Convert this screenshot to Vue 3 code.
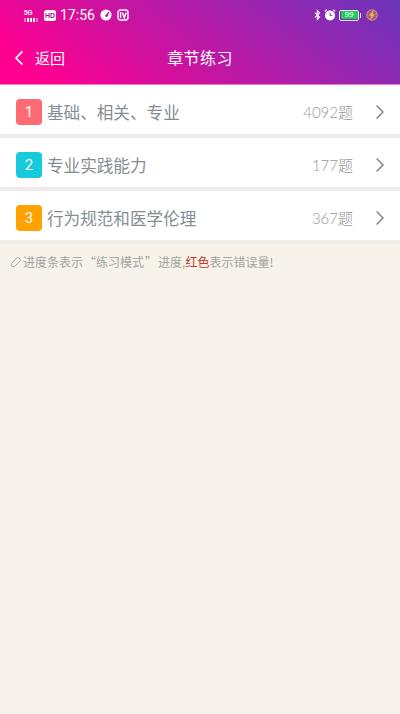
<template>
  <div class="page">
    <header class="top">
      <div class="status">
        <div class="status-left">
          <div class="signal">
            <span class="net">5G</span>
            <span class="bars"><i></i><i></i><i></i><i></i><i></i></span>
          </div>
          <span class="hd">HD</span>
          <span class="time">17:56</span>
          <svg width="12" height="12" viewBox="0 0 12 12">
            <circle cx="6" cy="6" r="5.6" fill="#fff" />
            <path d="M5.4 7 8.8 3.2 6.8 7.8z" fill="#b0129c" stroke="#b0129c" stroke-width="1" />
          </svg>
          <svg class="tv" width="12" height="12" viewBox="0 0 12 12">
            <rect x="1" y="1" width="10" height="10" rx="2.5" fill="none" stroke="#fff" stroke-width="1.4" />
            <path d="M3.6 3v6M5.4 3.4 7.3 8.6 9.2 3.4" fill="none" stroke="#fff" stroke-width="1.4" />
          </svg>
        </div>
        <div class="status-right">
          <svg width="7" height="12" viewBox="0 0 8 12">
            <path d="M1 3.2 6.4 8.4 3.8 11V1l2.6 2.6L1 8.8" fill="none" stroke="#fff" stroke-width="1.2" />
          </svg>
          <svg class="clock" width="12" height="12" viewBox="0 0 12 12">
            <circle cx="6" cy="6.4" r="5" fill="#fff" />
            <path d="M6 3.6v3h2.2" fill="none" stroke="#9a24a8" stroke-width="1" />
            <path d="M.8 2.4 2.6.8M11.2 2.4 9.4.8" stroke="#fff" stroke-width="1.2" />
          </svg>
          <div class="battery">
            <span class="level">99</span>
          </div>
          <svg class="charge" width="12" height="12" viewBox="0 0 12 12">
            <circle cx="6" cy="6" r="5.2" fill="#a25a96" stroke="#d8906c" stroke-width="1.1" />
            <path d="M7.6 1 3 6.8h2.4L4.2 11 9 5.2H6.6z" fill="#f8b82c" />
          </svg>
        </div>
      </div>
      <div class="nav">
        <div class="back">
          <svg width="10" height="16" viewBox="0 0 10 16">
            <path d="M8.4 1.4 2 8l6.4 6.6" fill="none" stroke="#fff" stroke-width="1.7" />
          </svg>
          <span>返回</span>
        </div>
        <h1>章节练习</h1>
      </div>
    </header>

    <ul class="list">
      <li v-for="item in chapters" :key="item.id" class="row">
        <span class="num" :style="{ background: item.color }">{{ item.id }}</span>
        <span class="name">{{ item.name }}</span>
        <span class="count">{{ item.count }}题</span>
        <svg class="arrow" width="10" height="16" viewBox="0 0 10 16">
          <path d="M1.6 1.4 8 8l-6.4 6.6" fill="none" stroke="#7a8a8f" stroke-width="1.5" />
        </svg>
      </li>
    </ul>

    <p class="tip">
      <svg width="12" height="12" viewBox="0 0 12 12">
        <path d="M1.4 7.4 7 1.8c.5-.5 1.2-.5 1.7 0l1.5 1.5c.5.5.5 1.2 0 1.7L4.6 10.6H2.2L1.2 9.4z" fill="none" stroke="#a5a5a2" stroke-width="1" />
      </svg>
      <span>进度条表示<span class="q open">“</span>练习模式<span class="q close">”</span>进度,<em>红色</em>表示错误量!</span>
    </p>
  </div>
</template>

<script setup>
const chapters = [
  { id: 1, name: '基础、相关、专业', count: 4092, color: '#ff6b72' },
  { id: 2, name: '专业实践能力', count: 177, color: '#17cbdc' },
  { id: 3, name: '行为规范和医学伦理', count: 367, color: '#ffa200' }
]
</script>

<style>
html,
body {
  margin: 0;
  background: #f7f2ea;
}
</style>

<style scoped>
.page {
  min-height: 714px;
  background: #f7f2ea;
  font-family: "Noto Sans CJK SC", "Liberation Sans", sans-serif;
}

.top {
  height: 85px;
  box-sizing: border-box;
  background: linear-gradient(37deg, #ff0090 10%, #b81aa6 52%, #6a35bc 100%);
  border-bottom: 1px solid #f07ad0;
  color: #fff;
}

.status {
  height: 30px;
  padding: 0 22px 0 24px;
  display: flex;
  justify-content: space-between;
  align-items: center;
}

.status-left,
.status-right {
  display: flex;
  align-items: center;
}

.signal {
  display: flex;
  flex-direction: column;
  width: 17px;
  margin-right: 3px;
}

.net {
  font: 700 6.5px/7px "Liberation Sans", sans-serif;
}

.bars {
  display: flex;
  align-items: flex-end;
  gap: 1px;
  height: 6px;
}

.bars i {
  width: 2px;
  height: 4px;
  background: #fff;
}

.bars i:first-child,
.bars i:last-child {
  background: rgba(255, 255, 255, 0.45);
}

.hd {
  width: 12px;
  height: 11px;
  border-radius: 2.5px;
  background: #fff;
  color: #b0129c;
  font: 700 7px/11px "Liberation Sans", sans-serif;
  text-align: center;
  margin-right: 4px;
}

.time {
  width: 35px;
  font: 400 14px/18px Roboto, sans-serif;
  margin-right: 5px;
}

.tv {
  margin-left: 5px;
}

.clock {
  margin-left: 3px;
}

.battery {
  width: 17px;
  height: 8px;
  margin-left: 3px;
  margin-right: 2px;
  border: 1px solid #e6dcee;
  border-radius: 2px;
  padding: 0.5px;
  position: relative;
}

.battery::after {
  content: "";
  position: absolute;
  right: -3px;
  top: 2px;
  width: 1.5px;
  height: 5px;
  background: #e6dcee;
}

.level {
  display: block;
  height: 8px;
  border-radius: 1px;
  background: #1fcf58;
  font: 400 8px/8px "Liberation Sans", sans-serif;
  text-align: center;
}

.charge {
  margin-left: 5px;
}

.nav {
  height: 54px;
  display: flex;
  align-items: center;
  justify-content: center;
  position: relative;
}

.back {
  position: absolute;
  left: 14px;
  top: 17px;
  display: flex;
  align-items: center;
  gap: 11px;
  font-size: 15px;
  line-height: 22px;
}

.nav h1 {
  margin: 0;
  font-size: 16px;
  font-weight: 400;
  letter-spacing: 0.4px;
}

.list {
  margin: 0;
  padding: 0 0 4px;
  list-style: none;
  background: #ecece9;
  display: flex;
  flex-direction: column;
  gap: 4px;
}

.row {
  height: 49px;
  box-sizing: border-box;
  padding: 5px 15px 0 16px;
  background: #fff;
  display: flex;
  align-items: center;
}

.num {
  width: 26px;
  height: 26px;
  margin-right: 5px;
  border-radius: 4px;
  color: #fff;
  font: 400 15px/26px Roboto, sans-serif;
  text-align: center;
}

.name {
  flex: 1;
  font-size: 16.6px;
  color: #848d93;
}

.count {
  font: 300 15px/20px Lato, "Noto Sans CJK SC", sans-serif;
  color: #999;
  margin-right: 22px;
}

.tip {
  margin: 0;
  padding: 9px 10px 0;
  display: flex;
  align-items: center;
  gap: 1px;
  font-size: 12px;
  line-height: 18px;
  color: #a3a3a0;
}

.q {
  display: inline-block;
}

.q.open {
  width: 13px;
  text-align: right;
}

.q.close {
  width: 14px;
  text-align: center;
}

.tip em {
  font-style: normal;
  color: #c0392b;
}
</style>
